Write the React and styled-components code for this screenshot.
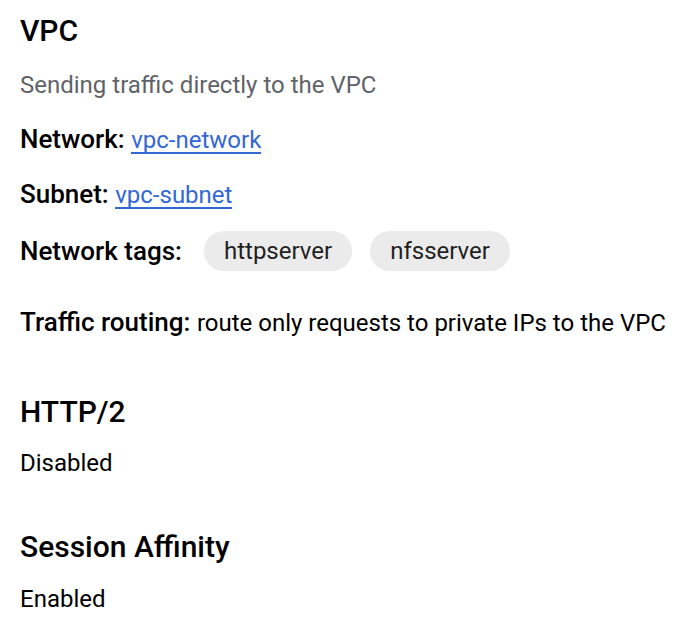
import React from "react";
import styled, { createGlobalStyle } from "styled-components";

const GlobalStyle = createGlobalStyle`
  body {
    margin: 0;
    background: #ffffff;
    font-family: Roboto, "Liberation Sans", sans-serif;
    color: #000;
  }
`;

const Page = styled.div`
  padding: 13px 20px 0;
  display: flex;
  flex-direction: column;
`;

const Section = styled.section`
  display: flex;
  flex-direction: column;
  margin-bottom: ${(p) => p.gap || "0"};
`;

const Heading = styled.h2`
  margin: 0 0 ${(p) => p.mb || "18px"};
  font-size: 30px;
  font-weight: 500;
  line-height: 36px;
  color: #000;
`;

const Description = styled.p`
  margin: 0 0 22px;
  font-size: 24px;
  line-height: 32px;
  color: #5f6368;
`;

const Row = styled.div`
  display: flex;
  align-items: ${(p) => p.align || "baseline"};
  min-height: ${(p) => p.height || "32px"};
  font-size: 24px;
  line-height: 32px;
  color: #000;
  white-space: pre;
  margin-bottom: ${(p) => p.mb || "0"};
`;

const Label = styled.span`
  font-size: 26px;
  font-weight: 500;
  margin-right: ${(p) => p.space || "0"};
`;

const Link = styled.a`
  color: #3367d6;
  text-decoration: none;
  border-bottom: 2px solid #3367d6;
  line-height: 24px;
`;

const Chips = styled.div`
  display: flex;
  gap: 18px;
`;

const Chip = styled.span`
  background: #ebebeb;
  border-radius: 20px;
  height: 40px;
  padding: 0 20px;
  display: flex;
  align-items: center;
  font-size: 24px;
  color: #1f1f1f;
`;

const Value = styled.div`
  font-size: 24px;
  line-height: 32px;
  color: #000;
`;

const tags = ["httpserver", "nfsserver"];

const App = () => (
  <>
    <GlobalStyle />
    <Page>
      <Section gap="55px">
        <Heading mb="20px">VPC</Heading>
        <Description>Sending traffic directly to the VPC</Description>
        <Row mb="23px">
          <Label>Network: </Label>
          <Link href="#">vpc-network</Link>
        </Row>
        <Row mb="21px">
          <Label>Subnet: </Label>
          <Link href="#">vpc-subnet</Link>
        </Row>
        <Row align="center" height="40px" mb="35px">
          <Label space="22px">Network tags:</Label>
          <Chips>
            {tags.map((t) => (
              <Chip key={t}>{t}</Chip>
            ))}
          </Chips>
        </Row>
        <Row>
          <Label>Traffic routing: </Label>
          route only requests to private IPs to the VPC
        </Row>
      </Section>
      <Section gap="50px">
        <Heading mb="17px">HTTP/2</Heading>
        <Value>Disabled</Value>
      </Section>
      <Section>
        <Heading>Session Affinity</Heading>
        <Value>Enabled</Value>
      </Section>
    </Page>
  </>
);

export default App;
